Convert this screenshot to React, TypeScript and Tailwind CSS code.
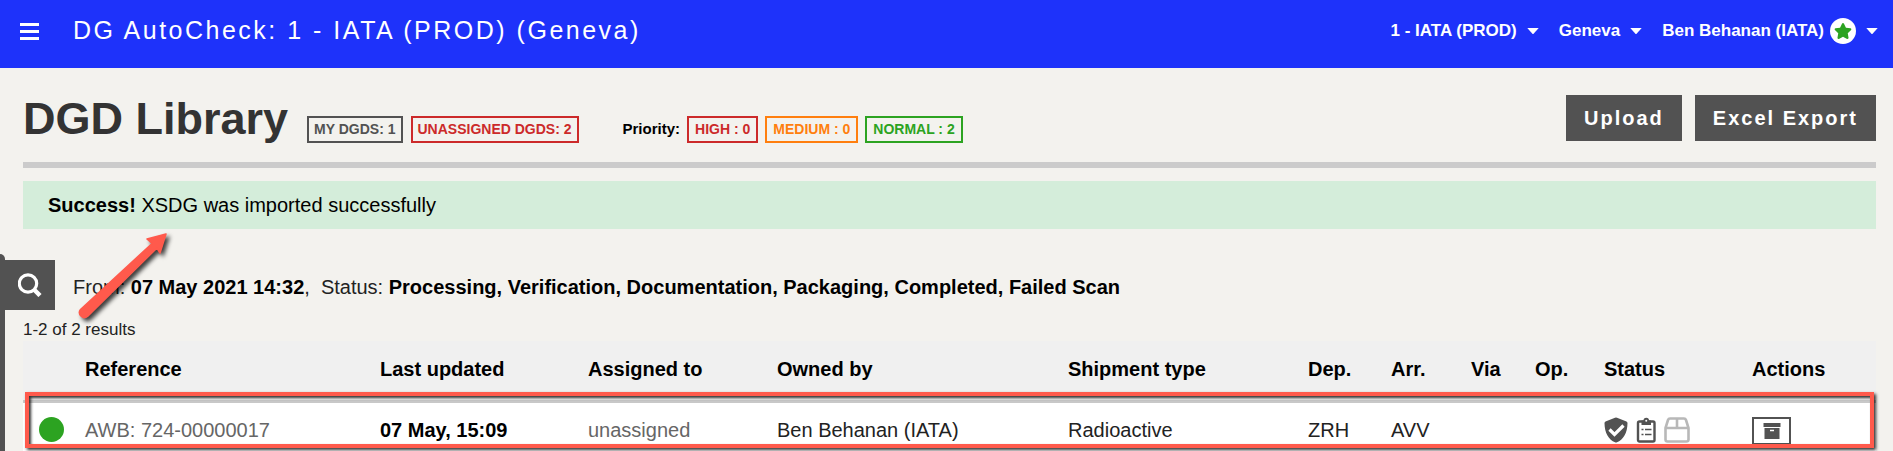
import { FaStar } from "react-icons/fa";
import type { ReactNode } from "react";

const SUMMARY = [
  { label: "MY DGDS: 1", className: "px-[5px] border-[#525252] text-[#525252]" },
  { label: "UNASSIGNED DGDS: 2", className: "px-[5px] border-[#cc2a2a] text-[#cc2a2a]" },
];

const PRIORITIES = [
  { label: "HIGH : 0", className: "px-[6px] border-[#cc2a2a] text-[#cc2a2a]" },
  { label: "MEDIUM : 0", className: "px-[6px] border-[#ff7f0e] text-[#ff7f0e]" },
  { label: "NORMAL : 2", className: "px-[6px] border-[#2ca321] text-[#2ca321]" },
];

const COLUMNS = [
  { label: "", width: "w-[62px]" },
  { label: "Reference", width: "w-[295px]" },
  { label: "Last updated", width: "w-[208px]" },
  { label: "Assigned to", width: "w-[189px]" },
  { label: "Owned by", width: "w-[291px]" },
  { label: "Shipment type", width: "w-[240px]" },
  { label: "Dep.", width: "w-[83px]" },
  { label: "Arr.", width: "w-[80px]" },
  { label: "Via", width: "w-[64px]" },
  { label: "Op.", width: "w-[69px]" },
  { label: "Status", width: "w-[148px]" },
  { label: "Actions", width: "w-[124px]" },
];

function Badge({ label, className }: { label: string; className: string }) {
  return (
    <span
      className={`flex h-[27px] items-center border-2 text-[14px] font-bold whitespace-nowrap ${className}`}
    >
      {label}
    </span>
  );
}

function NavMenu({ children }: { children: ReactNode }) {
  return (
    <button
      type="button"
      className="flex items-center gap-[10px] text-[17px] font-bold whitespace-nowrap"
    >
      {children}
      <svg width="12" height="6" viewBox="0 0 12 6" aria-hidden="true">
        <path d="M0.300 0h11.400L6.600 5.700Q6 6.200 5.400 5.700Z" fill="#fff" />
      </svg>
    </button>
  );
}

function SearchIcon() {
  return (
    <svg width="24" height="24" viewBox="0 0 24 24" fill="none" stroke="#fff" aria-hidden="true">
      <circle cx="10" cy="10.500" r="8.700" strokeWidth="3.200" />
      <path d="m16.500 17 5.500 5.500" strokeWidth="4.500" />
    </svg>
  );
}

function ShieldIcon() {
  return (
    <svg width="24" height="26" viewBox="0 0 24 26" aria-label="Verified">
      <path
        d="M11 0.800Q12 0.300 13 0.800L22.500 4.500Q23.500 5 23.500 6C23.500 16 19 23 13 25.300Q12 25.700 11 25.300C5 23 0.500 16 0.500 6Q0.500 5 1.500 4.500Z"
        fill="#525252"
      />
      <path d="m5.500 12.500 5 5L19.500 8.500" fill="none" stroke="#fff" strokeWidth="3.200" />
    </svg>
  );
}

function ClipboardIcon() {
  return (
    <svg width="20" height="26" viewBox="0 0 20 26" aria-label="Documentation">
      <rect x="2" y="4.500" width="16.500" height="20" rx="1.500" fill="none" stroke="#525252" strokeWidth="2.400" />
      <path d="M5.500 3.500h2a2.750 2.750 0 0 1 5.500 0h2v4.500h-9.500Z" fill="#525252" />
      <circle cx="10.250" cy="3.700" r="1" fill="#fff" />
      <path d="M5.500 12.500h2M5.500 17.500h2M9 12.500h6.500M9 17.500h6.500" stroke="#525252" strokeWidth="1.600" />
    </svg>
  );
}

function PackageIcon() {
  return (
    <svg width="26" height="26" viewBox="0 0 26 26" aria-label="Packaging">
      <path
        d="M1.500 11 4 3Q4.500 1.500 6 1.500H20Q21.500 1.500 22 3L24.500 11V22.500Q24.500 24.500 22.500 24.500H3.500Q1.500 24.500 1.500 22.500ZM1.500 11h23M13 1.500V11"
        fill="none"
        stroke="#b8b8b8"
        strokeWidth="2.600"
      />
    </svg>
  );
}

function ArchiveIcon() {
  return (
    <svg width="18" height="16" viewBox="0 0 18 16" aria-hidden="true">
      <path d="M0.500 0h17v4h-17ZM1.500 5h15v11h-15Z" fill="#525252" />
      <path d="M7 7.500h4" stroke="#fff" strokeWidth="1.500" />
    </svg>
  );
}

function Arrow() {
  return (
    <svg
      className="pointer-events-none absolute -top-[33px] left-[67px] drop-shadow-[3px_3px_2px_rgba(0,0,0,0.75)]"
      width="104"
      height="100"
      viewBox="0 0 104 100"
      aria-hidden="true"
    >
      <path
        d="M94 7 75 12 80 16.500 8.500 82.500A5 5 0 0 0 15.500 89.500L85 21 88 26Z"
        fill="#ff5a4c"
        stroke="#ff5a4c"
        strokeWidth="1.500"
        strokeLinejoin="round"
      />
    </svg>
  );
}

export default function App() {
  return (
    <div className="min-h-screen overflow-hidden bg-[#f3f2ee] font-['Liberation_Sans',Arial,sans-serif] text-black">
      <header className="flex h-[68px] items-center justify-between bg-[#1e32fa] pt-[12px] pr-[15px] pb-[18px] pl-5 text-white">
        <div className="flex items-center gap-[34px]">
          <button type="button" aria-label="Menu" className="flex w-[19px] flex-col gap-1">
            <span className="h-[3px] bg-white" />
            <span className="h-[3px] bg-white" />
            <span className="h-[3px] bg-white" />
          </button>
          <span className="text-[25px] tracking-widest whitespace-nowrap">
            DG AutoCheck: 1 - IATA (PROD) (Geneva)
          </span>
        </div>
        <nav className="flex items-center gap-5">
          <NavMenu>1 - IATA (PROD)</NavMenu>
          <NavMenu>Geneva</NavMenu>
          <NavMenu>
            <span className="flex items-center gap-[6px]">
              Ben Behanan (IATA)
              <span className="flex size-[26px] items-center justify-center rounded-full bg-white">
                <FaStar className="size-[18px] text-[#2ca321]" />
              </span>
            </span>
          </NavMenu>
        </nav>
      </header>

      <main className="pr-[17px] pl-[23px]">
        <div className="flex h-[100px] items-start justify-between border-b-6 border-[#cbcbcb] pt-[27px]">
          <div className="flex items-end">
            <h1 className="text-[45px] leading-[48px] font-bold whitespace-nowrap text-[#333]">
              DGD Library
            </h1>
            <div className="ml-[19px] flex gap-2">
              {SUMMARY.map((item) => (
                <Badge key={item.label} {...item} />
              ))}
            </div>
            <div className="ml-[44px] flex items-center gap-[7px]">
              <span className="text-[15px] font-bold">Priority:</span>
              {PRIORITIES.map((item) => (
                <Badge key={item.label} {...item} />
              ))}
            </div>
          </div>
          <div className="flex gap-[13px] text-[20px] font-bold tracking-widest text-white">
            <button type="button" className="h-[46px] bg-[#525252] px-[18px]">
              Upload
            </button>
            <button type="button" className="h-[46px] bg-[#525252] px-[18px] whitespace-nowrap">
              Excel Export
            </button>
          </div>
        </div>

        <p role="status" className="mt-[13px] flex h-12 items-center bg-[#d4edda] px-[25px] text-[20px]">
          <span>
            <b>Success!</b> XSDG was imported successfully
          </span>
        </p>
      </main>

      <div className="mt-[25px] flex">
        <div className="w-[5px] shrink-0 rounded-tr-[5px] bg-[#525252]" />
        <div className="min-w-0 grow pt-[6px] pr-[17px]">
          <div className="relative flex items-center gap-[18px] text-[20px] text-[#222]">
            <button
              type="button"
              aria-label="Search"
              className="flex size-[50px] items-center justify-center bg-[#525252]"
            >
              <SearchIcon />
            </button>
            <p className="pt-1 whitespace-nowrap">
              From: <b className="text-black">07 May 2021 14:32</b>,&nbsp; Status:{" "}
              <b className="text-black">
                Processing, Verification, Documentation, Packaging, Completed, Failed Scan
              </b>
            </p>
            <Arrow />
          </div>

          <div className="pl-[18px]">
            <p className="pt-[8px] text-[17px] leading-[23px] text-[#222]">1-2 of 2 results</p>

            <div className="relative">
              <table className="w-full table-fixed border-separate border-spacing-0 text-left text-[20px]">
                <thead className="bg-[#f0f0f0]">
                  <tr className="h-[62px]">
                    {COLUMNS.map(({ label, width }) => (
                      <th
                        key={label}
                        className={`border-b-3 border-[#c8c8c8] p-0 pb-[3px] whitespace-nowrap ${width}`}
                      >
                        {label}
                      </th>
                    ))}
                  </tr>
                </thead>
                <tbody className="bg-white text-[#222]">
                  <tr className="h-[53px]">
                    <td className="p-0">
                      <span className="ml-4 block size-[25px] rounded-full bg-[#2ca321]" />
                    </td>
                    <td className="p-0 text-[#666]">AWB: 724-00000017</td>
                    <td className="p-0 font-bold text-black">07 May, 15:09</td>
                    <td className="p-0 text-[#666]">unassigned</td>
                    <td className="p-0">Ben Behanan (IATA)</td>
                    <td className="p-0">Radioactive</td>
                    <td className="p-0">ZRH</td>
                    <td className="p-0">AVV</td>
                    <td className="p-0" />
                    <td className="p-0" />
                    <td className="p-0">
                      <span className="flex gap-2">
                        <ShieldIcon />
                        <ClipboardIcon />
                        <PackageIcon />
                      </span>
                    </td>
                    <td className="p-0 pt-[3px]">
                      <button
                        type="button"
                        aria-label="Archive"
                        className="flex h-[28px] w-[39px] items-center justify-center border-2 border-[#525252]"
                      >
                        <ArchiveIcon />
                      </button>
                    </td>
                  </tr>
                </tbody>
              </table>
              <div className="pointer-events-none absolute inset-x-[2px] top-[51px] h-[56px] border-4 border-[#ff5a4c] shadow-[2px_2px_3px_rgba(0,0,0,0.8),inset_2px_2px_3px_rgba(0,0,0,0.8)]" />
            </div>
          </div>
        </div>
      </div>
    </div>
  );
}
